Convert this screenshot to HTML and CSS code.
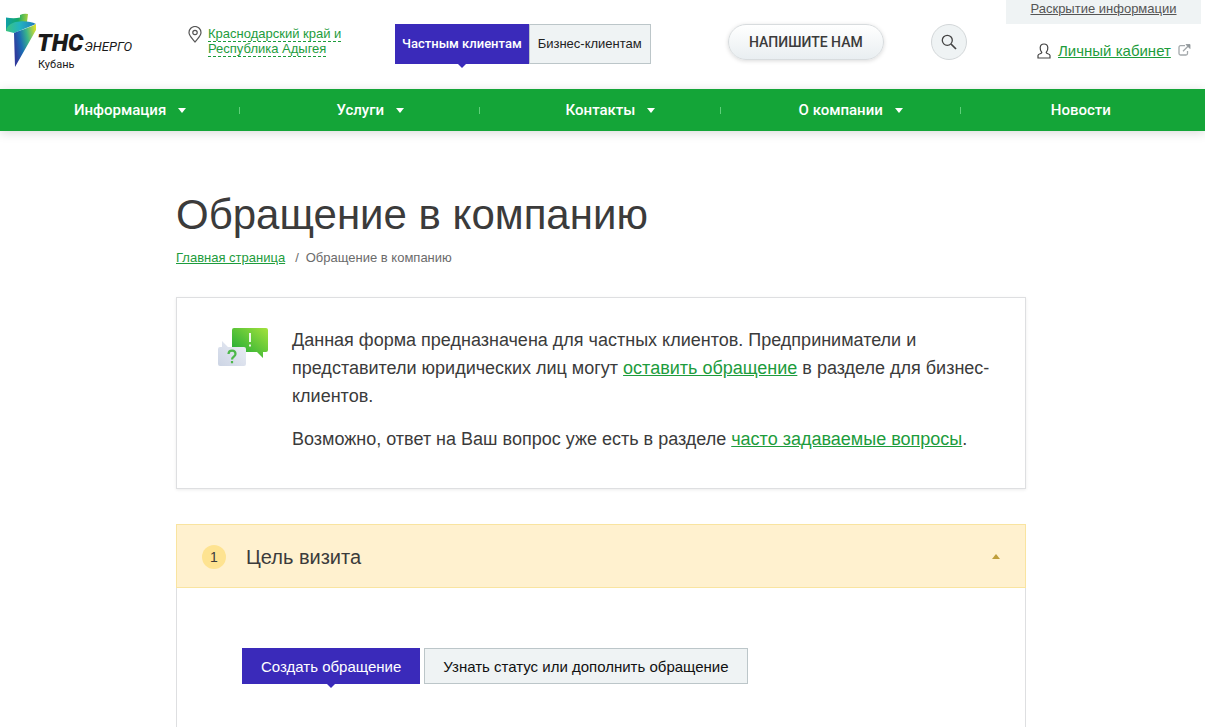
FILE: index.html
```html
<!DOCTYPE html>
<html lang="ru">
<head>
<meta charset="utf-8">
<title>Обращение в компанию</title>
<link rel="stylesheet" href="styles.css">
</head>
<body>
<header class="header">
  <a class="logo" href="#">
    <svg class="logo-mark" width="31" height="56" viewBox="0 0 31 56" aria-hidden="true">
      <defs>
        <linearGradient id="wing" x1="0" y1="0" x2="1" y2="0"><stop offset="0" stop-color="#0f9fa8"/><stop offset=".55" stop-color="#14a968"/><stop offset="1" stop-color="#a8cf3c"/></linearGradient>
        <linearGradient id="band" x1="0" y1="0" x2="1" y2="0"><stop offset="0" stop-color="#3cc47c"/><stop offset=".45" stop-color="#22b4c0"/><stop offset="1" stop-color="#2277bd"/></linearGradient>
        <linearGradient id="stem" x1="0" y1=".5" x2="1" y2=".15"><stop offset="0" stop-color="#2f3a9c"/><stop offset=".3" stop-color="#1b6cb4"/><stop offset=".6" stop-color="#3ab48a"/><stop offset="1" stop-color="#dbe02c"/></linearGradient>
      </defs>
      <path d="M0 4.500q8 1.500 14 0V2q4-2 8-1l-1 8-7 4L0 18z" fill="url(#wing)"/>
      <path d="M0 18C1 12 6 9 14 8.500 20 8 26 9 30 11L8 20z" fill="url(#band)"/>
      <path d="M30 11v6L9 54 8 20C14 17 23 15 30 11z" fill="url(#stem)"/>
    </svg>
    <span class="logo-text">
      <span class="logo-name"><b>ТНС</b><i>ЭНЕРГО</i></span>
      <span class="logo-city">Кубань</span>
    </span>
  </a>
  <div class="region">
    <svg width="14" height="17" viewBox="0 0 14 17" fill="none" stroke="#555" stroke-width="1.2" aria-hidden="true"><path d="M7 16C4.500 12.500 1 10 1 6.500a6 6 0 0 1 12 0C13 10 9.500 12.500 7 16z"/><circle cx="7" cy="6.500" r="2.200"/></svg>
    <a class="region-link" href="#">Краснодарский край и Республика Адыгея</a>
  </div>
  <div class="audience">
    <a class="audience-tab audience-active" href="#">Частным клиентам</a>
    <a class="audience-tab" href="#">Бизнес-клиентам</a>
  </div>
  <div class="cell"><button class="write" type="button">НАПИШИТЕ НАМ</button></div>
  <div class="cell"><button class="search" type="button" aria-label="Поиск">
    <svg width="16" height="16" viewBox="0 0 16 16" fill="none" stroke="#444" stroke-width="1.300" aria-hidden="true"><circle cx="6.300" cy="6.300" r="5"/><path d="m10 10 5 5" stroke-width="1.700"/></svg>
  </button></div>
  <div class="account">
    <a class="disclosure" href="#">Раскрытие информации</a>
    <div class="cabinet">
      <svg width="14" height="17" viewBox="0 0 14 17" fill="none" stroke="#444" stroke-width="1.200" aria-hidden="true"><path d="M1 15v-2.500C1 10.500 5 11 4.800 9.500 3.500 8 3 6.500 3.200 4.500 3.400 2 5 1 7 1s3.600 1 3.800 3.500c.2 2-.3 3.500-1.600 5-.2 1.500 3.800 1 3.800 3V15z"/></svg>
      <a class="cabinet-link" href="#">Личный кабинет</a>
      <svg class="external" width="13" height="15" viewBox="0 0 13 15" fill="none" stroke="#a3a8ab" stroke-width="1.300" aria-hidden="true"><path d="M7 1.700H2.500A1.500 1.500 0 0 0 1 3.200v6.300A1.500 1.500 0 0 0 2.500 11H8a1.500 1.500 0 0 0 1.500-1.500V7M5 7.200l5-5"/><path d="M8 .5h4v4z" fill="#8f9699" stroke="#8f9699" stroke-width=".8"/></svg>
    </div>
  </div>
</header>
<nav class="nav">
  <a class="nav-item has-menu" href="#">Информация</a>
  <a class="nav-item has-menu" href="#">Услуги</a>
  <a class="nav-item has-menu" href="#">Контакты</a>
  <a class="nav-item has-menu" href="#">О компании</a>
  <a class="nav-item" href="#">Новости</a>
</nav>
<div class="page">
<main class="main">
  <h1 class="title">Обращение в компанию</h1>
  <div class="crumbs"><a href="#">Главная страница</a><span class="slash">/</span><span>Обращение в компанию</span></div>
  <section class="notice">
    <svg class="notice-icon" width="50" height="39" viewBox="0 0 50 39" aria-hidden="true">
      <defs>
        <linearGradient id="green" x1="0" y1="1" x2="1" y2="0"><stop offset="0" stop-color="#10a535"/><stop offset="1" stop-color="#a4e23c"/></linearGradient>
        <linearGradient id="grey" x1="0" y1="1" x2="1" y2="0"><stop offset="0" stop-color="#ccd4e4"/><stop offset="1" stop-color="#eceff6"/></linearGradient>
      </defs>
      <path d="M16 0h32q2 0 2 2v20q0 2-2 2h-3v6l-6-6H14V2q0-2 2-2z" fill="url(#green)"/>
      <path d="M32 5v9M32 16.500v2" stroke="#fff" stroke-width="1.800"/>
      <path d="M2 19h2v-6l6 6h16q2 0 2 2v15q0 2-2 2H2q-2 0-2-2V21q0-2 2-2z" fill="url(#grey)"/>
      <path d="M10.500 26c.3-4.500 7-4.300 7 0 0 2.600-3.500 2.500-3.500 5.500M14 33v2.200" fill="none" stroke="#4db84a" stroke-width="2.200"/>
    </svg>
    <div class="notice-text">
      <p>Данная форма предназначена для частных клиентов. Предприниматели и представители юридических лиц могут <a href="#">оставить обращение</a> в разделе для бизнес-клиентов.</p>
      <p>Возможно, ответ на Ваш вопрос уже есть в разделе <a href="#">часто задаваемые вопросы</a>.</p>
    </div>
  </section>
  <section class="step">
    <h2 class="step-heading"><button class="step-toggle" type="button" aria-expanded="true">
      <span class="step-number">1</span><span class="step-title">Цель визита</span>
    </button></h2>
    <div class="step-body">
      <button class="choice choice-active" type="button">Создать обращение</button>
      <button class="choice" type="button">Узнать статус или дополнить обращение</button>
    </div>
  </section>
</main>
</div>
</body>
</html>
```
FILE: styles.css
```css
* { box-sizing: border-box; }
body { display: flex; flex-direction: column; min-height: 100vh; margin: 0; background: #fff; color: #3b3b3b; font-family: "Liberation Sans", Arial, sans-serif; font-size: 13px; }
a { color: #1d9c3c; }
button { font-family: inherit; cursor: pointer; }
svg { flex: none; }

.header { display: grid; grid-template-columns: 188fr 207fr 333fr 203fr 75fr 199fr; align-items: start; min-height: 89px; }
.logo { display: flex; padding: 13px 0 0 6px; color: #1a1a1a; text-decoration: none; font-family: Roboto, sans-serif; }
.logo-text { display: flex; flex-direction: column; padding-top: 18px; }
.logo-name { display: flex; align-items: baseline; gap: 1px; line-height: 24px; }
.logo-name b { font-size: 24px; font-weight: 900; font-style: italic; }
.logo-name i { font-size: 13px; }
.logo-city { padding-left: 1px; font-size: 11px; line-height: 12px; }

.region { display: flex; gap: 6px; padding: 26px 40px 0 0; }
.region-link { line-height: 15px; text-decoration: underline dashed 1px; text-underline-offset: 3px; text-decoration-skip-ink: none; }

.audience { display: flex; padding-top: 24px; }
.audience-tab { height: 40px; padding: 0 8px; border: 1px solid #bcc6c9; background: #eff3f4; color: #222; line-height: 38px; text-decoration: none; white-space: nowrap; }
.audience-active { position: relative; padding: 0 6px; border-color: #3a2aba; background: #3a2aba; color: #fff; font-family: Roboto, sans-serif; font-weight: 500; }
.audience-active::after, .choice-active::after { content: ""; position: absolute; top: 100%; left: 50%; margin-left: -5px; border: 5px solid transparent; border-top-color: #3a2aba; border-bottom: 0; }

.cell { padding-top: 24px; }
.write { height: 36px; padding: 0 20px; border: 1px solid #d8dcde; border-radius: 18px; background: linear-gradient(#fff, #e9eef1); box-shadow: 0 1px 4px rgba(0, 0, 0, .15); color: #3b3b3b; font-family: Roboto, sans-serif; font-size: 14px; font-weight: 500; white-space: nowrap; }
.search { display: flex; align-items: center; justify-content: center; width: 36px; height: 36px; padding: 0; border: 1px solid #d3d7d9; border-radius: 50%; background: #eff3f4; }

.account { display: flex; flex-direction: column; padding-right: 4px; }
.disclosure { height: 24px; background: #eff3f4; color: #555; line-height: 18px; text-align: center; }
.cabinet { display: flex; align-items: center; gap: 7px; padding: 17px 0 0 31px; white-space: nowrap; }
.cabinet-link { font-size: 15px; line-height: 20px; }

.nav { display: grid; grid-template-columns: repeat(5, 1fr); padding-right: 4px; background: #14a538; box-shadow: 0 2px 10px rgba(0, 0, 0, .15); }
.nav-item { display: flex; align-items: center; justify-content: center; height: 42px; color: #fff; font-family: Roboto, sans-serif; font-size: 15px; font-weight: 500; text-decoration: none; }
.has-menu { padding-left: 20px; background: linear-gradient(#5fd07a, #5fd07a) right center / 1px 7px no-repeat; }
.has-menu::after { content: ""; margin-left: 12px; border: 4px solid transparent; border-top: 5px solid #fff; border-bottom: 0; }

.page { display: flex; flex: 1; justify-content: center; padding-right: 3px; }
.main { display: flex; flex: 0 1 850px; flex-direction: column; }
.title { margin: 0; padding-top: 60px; font-size: 42px; font-weight: normal; line-height: 48px; }
.crumbs { padding-top: 11px; color: #6b6b6b; line-height: 16px; }
.slash { margin: 0 7px 0 10px; }
.notice { display: flex; gap: 24px; margin-top: 31px; padding: 28px 33px 35px 41px; border: 1px solid #dedfe1; box-shadow: 0 1px 3px rgba(0, 0, 0, .08); }
.notice-icon { margin-top: 2px; }
.notice-text { font-size: 18px; line-height: 28px; }
.notice-text p { margin: 0; }
.notice-text p + p { margin-top: 15px; }

.step { flex: 1; margin-top: 35px; border: 1px solid #dedfe1; border-width: 0 1px; }
.step-heading { margin: 0 -1px; }
.step-toggle { display: flex; align-items: center; gap: 20px; width: 100%; height: 64px; padding: 1px 25px 0; border: 1px solid #f9e4a0; background: #fff1cf; color: #3b3b3b; text-align: left; }
.step-number { width: 24px; border-radius: 50%; background: #fee391; font-size: 14px; line-height: 24px; text-align: center; }
.step-title { font-size: 20px; line-height: 24px; }
.step-toggle::after { content: ""; margin-left: auto; border: 4px solid transparent; border-bottom: 5px solid #bf9f3c; border-top: 0; }
.step-body { display: flex; gap: 4px; padding: 60px 65px 40px; align-items: flex-start; }
.choice { height: 36px; padding: 0 18px; border: 1px solid #bcc6c9; background: #eff3f4; color: #111; font-size: 15px; white-space: nowrap; }
.choice-active { position: relative; border-color: #3a2aba; background: #3a2aba; color: #fff; }
```
